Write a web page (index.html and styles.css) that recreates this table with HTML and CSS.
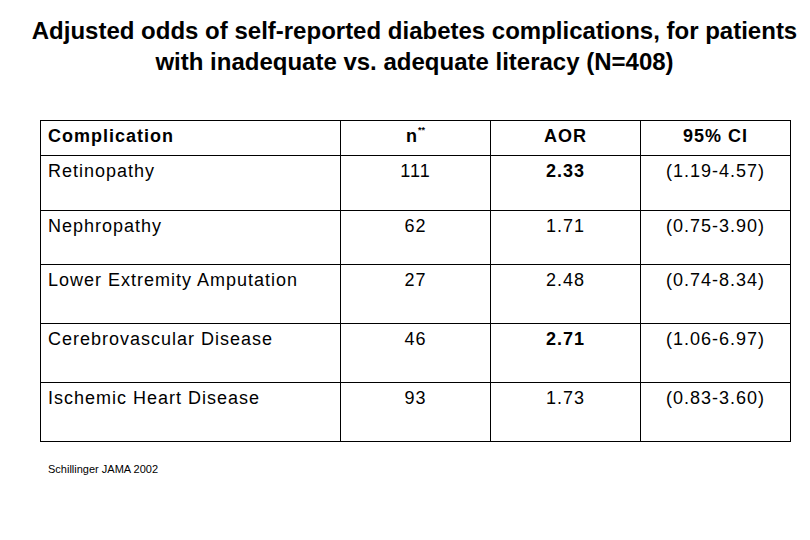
FILE: index.html
```html
<!DOCTYPE html>
<html>
<head>
<meta charset="utf-8">
<link rel="stylesheet" href="styles.css">
</head>
<body>
<div class="slide">
  <h1 class="title">Adjusted odds of self-reported diabetes complications, for patients<br>with inadequate vs. adequate literacy (N=408)</h1>
  <table class="odds">
    <colgroup>
      <col class="c-name"><col class="c-num"><col class="c-num"><col class="c-num">
    </colgroup>
    <thead>
      <tr class="r-head">
        <th class="name">Complication</th>
        <th>n<sup>**</sup></th>
        <th class="light">AOR</th>
        <th>95% CI</th>
      </tr>
    </thead>
    <tbody>
      <tr class="r1"><td class="name">Retinopathy</td><td>111</td><td class="bold">2.33</td><td>(1.19-4.57)</td></tr>
      <tr class="r2"><td class="name">Nephropathy</td><td>62</td><td>1.71</td><td>(0.75-3.90)</td></tr>
      <tr class="r3"><td class="name">Lower Extremity Amputation</td><td>27</td><td>2.48</td><td>(0.74-8.34)</td></tr>
      <tr class="r4"><td class="name">Cerebrovascular Disease</td><td>46</td><td class="bold">2.71</td><td>(1.06-6.97)</td></tr>
      <tr class="r5"><td class="name">Ischemic Heart Disease</td><td>93</td><td>1.73</td><td>(0.83-3.60)</td></tr>
    </tbody>
  </table>
  <p class="source">Schillinger JAMA 2002</p>
</div>
</body>
</html>
```

FILE: styles.css
```css
html, body {
  margin: 0;
  padding: 0;
  background: #fff;
}
body {
  width: 810px;
  height: 540px;
  overflow: hidden;
  font-family: "Liberation Sans", Arial, sans-serif;
  color: #000;
}
.slide {
  padding: 15px 21px 0 40px;
}
.title {
  margin: 0 -20px;
  font-weight: bold;
  font-size: 24px;
  line-height: 31px;
  text-align: center;
  white-space: nowrap;
}
.odds {
  margin-top: 43px;
  width: 750px;
  border-collapse: collapse;
  table-layout: fixed;
  font-size: 18px;
  line-height: 20px;
  letter-spacing: 1px;
}
.c-name { width: 300px; }
.c-num { width: 150px; }
.odds th, .odds td {
  border: 1px solid #000;
  padding: 5px 7px 0 7px;
  vertical-align: top;
  text-align: center;
  font-weight: normal;
}
.odds th { font-weight: bold; }
.odds .name { text-align: left; }
.odds .bold { font-weight: bold; }
.odds sup {
  font-size: 9px;
  line-height: 0;
  letter-spacing: 0;
  vertical-align: 9px;
}
.r-head { height: 35px; }
.r1 { height: 55px; }
.r2 { height: 54px; }
.r3 { height: 59px; }
.r4 { height: 59px; }
.r5 { height: 59px; }
.source {
  margin: 20px 0 0 8px;
  font-size: 11px;
  line-height: 14px;
}
```
